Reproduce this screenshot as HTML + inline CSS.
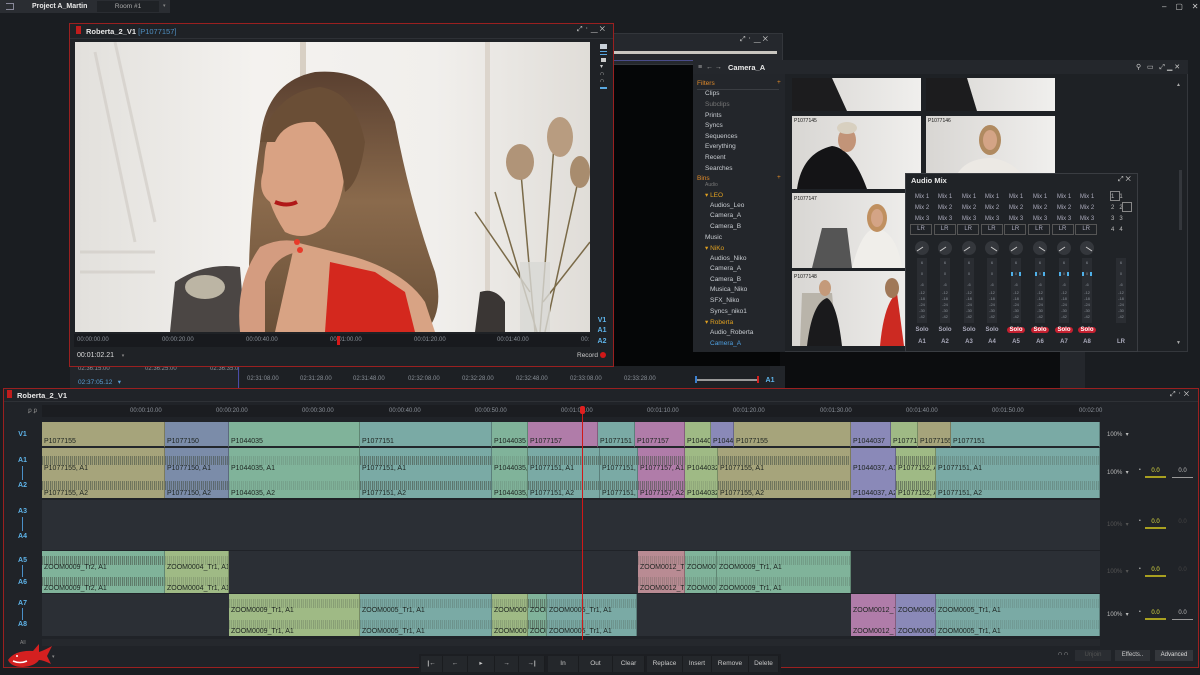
<!DOCTYPE html>
<html><head><meta charset="utf-8"><style>
*{margin:0;padding:0;box-sizing:border-box}
body{width:1200px;height:675px;background:#1a1d21;font-family:"Liberation Sans",sans-serif;color:#c8ccd0;position:relative;overflow:hidden;font-size:7px}
.abs{position:absolute}
.c{position:absolute;overflow:hidden;border-right:1px solid rgba(0,0,0,.25)}
.c i{position:absolute;left:2px;bottom:1px;font-style:normal;font-size:7px;color:#1d2420;white-space:nowrap}
.c i.l1{bottom:auto;top:17px}
.a42 i.l1{top:13px}
.c b{position:absolute;left:0;right:0;height:9px;background:repeating-linear-gradient(90deg,rgba(70,80,70,.6) 0 1px,rgba(70,80,70,.15) 1px 2px,rgba(70,80,70,.5) 2px 3px,transparent 3px 4px)}
.a50 b{top:8px}.a50 b.w2{top:33px}
.a42 b{top:5px}.a42 b.w2{top:26px}
.c.v{border-bottom:2px solid #22262b}
.y{background:#a6a47b}.bl{background:#7b8ca9}.g{background:#80b39a}.t{background:#7aaaa5}.p{background:#b07ca9}.u{background:#8a89b8}.l{background:#9fba85}.r{background:#b98b93}
.tl{position:absolute;left:3px;width:39px;text-align:center;color:#5eb4ea;font-weight:bold;font-size:7px}
.win{position:absolute;border:1px solid #8b1e1e;background:#24272c}
.ttl{font-weight:bold;color:#e8e8e8;font-size:7.5px}
.side div{position:absolute;left:12px;font-size:6.5px;color:#c9cdd2}
.mx{position:absolute;font-size:6px;color:#aab;text-align:center;width:22px}
.btn{position:absolute;top:656px;height:16px;background:#24272b;color:#c8c8c8;font-size:6.5px;text-align:center;line-height:16px;border-right:1px solid #1a1c1f}
.rt{position:absolute;font-size:6px;color:#8a9098}
</style></head><body>

<!-- top bar -->
<div class="abs" style="left:0;top:0;width:170px;height:13px;background:#2a2d32"></div>
<div class="abs" style="left:6px;top:3px;width:8px;height:7px;border:1px solid #889;border-left:none"></div>
<div class="abs ttl" style="left:32px;top:3px;font-size:7px">Project A_Martin</div>
<div class="abs" style="left:97px;top:1px;width:62px;height:11px;background:#1f2226;color:#aaa;font-size:6.5px;text-align:center;line-height:11px">Room #1</div>
<div class="abs" style="left:163px;top:3px;font-size:5px;color:#888">▾</div>
<div class="abs" style="left:1162px;top:2px;font-size:8px;color:#ccc">–&nbsp;&nbsp;&nbsp;&nbsp;▢&nbsp;&nbsp;&nbsp;&nbsp;✕</div>

<!-- background windows -->
<div class="abs" style="left:605px;top:33px;width:178px;height:32px;background:#25282d;border:1px solid #33363b"></div>
<div class="abs" style="left:612px;top:51px;width:165px;height:3px;background:#c9c6c0"></div>
<div class="abs" style="left:612px;top:60px;width:90px;height:1px;background:#4a4c8a"></div>
<div class="abs" style="left:740px;top:36px;font-size:7px;color:#ccc">⤢ ᛫ ▁ ✕</div>
<div class="abs" style="left:605px;top:65px;width:480px;height:322px;background:#050607"></div>
<div class="abs" style="left:1060px;top:352px;width:25px;height:36px;background:#24272c"></div>
<div class="abs" style="left:780px;top:352px;width:280px;height:36px;background:#0c0d0f"></div>

<!-- strip under viewer -->
<div class="abs" style="left:70px;top:366px;width:715px;height:22px;background:#22252a"></div>
<div class="abs" style="left:240px;top:366px;width:530px;height:22px;background:#1d2024"></div>
<div class="rt" style="left:78px;top:366px">02:36:15:00</div><div class="rt" style="left:145px;top:366px">02:36:25:00</div><div class="rt" style="left:210px;top:366px">02:36:35:0</div>
<div class="abs" style="left:78px;top:378px;font-size:6.5px;color:#5a9fd4">02:37:05.12 &nbsp; ▾</div>
<div class="abs" style="left:238px;top:366px;width:1px;height:22px;background:#4a4ca8"></div>
<div class="rt" style="left:247px;top:376px">02:31:08.00</div><div class="rt" style="left:300px;top:376px">02:31:28.00</div><div class="rt" style="left:353px;top:376px">02:31:48.00</div><div class="rt" style="left:408px;top:376px">02:32:08.00</div><div class="rt" style="left:462px;top:376px">02:32:28.00</div><div class="rt" style="left:516px;top:376px">02:32:48.00</div><div class="rt" style="left:570px;top:376px">02:33:08.00</div><div class="rt" style="left:624px;top:376px">02:33:28.00</div>
<div class="abs" style="left:696px;top:379px;width:62px;height:2px;background:#999"></div>
<div class="abs" style="left:695px;top:376px;width:2px;height:7px;background:#3a7fd0"></div>
<div class="abs" style="left:757px;top:376px;width:2px;height:7px;background:#d02020"></div>
<div class="tl" style="left:760px;top:377px;width:20px">A1</div>

<!-- viewer window -->
<div class="win" style="left:69px;top:23px;width:545px;height:344px;border-color:#9a2020;background:#1f2226">
 <div class="abs" style="left:6px;top:2px;width:5px;height:8px;background:#c01c1c"></div>
 <div class="abs ttl" style="left:16px;top:3px">Roberta_2_V1 <span style="color:#4f8fc0;font-weight:normal">[P1077157]</span></div>
 <div class="abs" style="right:8px;top:2px;font-size:7px;color:#ccc">⤢ ᛫ ▁ ✕</div>
 <div class="abs" style="left:0;top:14px;width:543px;height:1px;background:#2e3136"></div>
</div>
<svg class="abs" style="left:75px;top:42px" width="515" height="290" viewBox="0 0 515 290">
 <defs>
  <linearGradient id="bg" x1="0" x2="1"><stop offset="0" stop-color="#e2e0dc"/><stop offset=".35" stop-color="#f4f2ef"/><stop offset=".7" stop-color="#f1efec"/><stop offset="1" stop-color="#e0ddd8"/></linearGradient>
  <linearGradient id="hair" x1="0" x2="0" y1="0" y2="1"><stop offset="0" stop-color="#5a4030"/><stop offset=".5" stop-color="#8a6a4c"/><stop offset="1" stop-color="#6a5038"/></linearGradient>
 </defs>
 <rect width="515" height="290" fill="url(#bg)"/>
 <rect x="225" y="0" width="6" height="290" fill="#d8d0c4"/>
 <rect x="410" y="0" width="5" height="290" fill="#dcd5cc"/>
 <g stroke="#cfcac4" stroke-width="3" opacity=".6"><line x1="20" y1="10" x2="60" y2="200"/><line x1="40" y1="0" x2="80" y2="180"/><line x1="5" y1="210" x2="80" y2="210"/><line x1="5" y1="230" x2="80" y2="230"/></g>
 <g stroke="#7a6a48" stroke-width="1.5" fill="none"><path d="M460 290 L445 120"/><path d="M465 290 L480 90"/><path d="M462 290 L420 150"/><path d="M470 290 L505 130"/><path d="M455 250 L400 170"/><path d="M468 260 L515 200"/></g>
 <ellipse cx="445" cy="120" rx="14" ry="18" fill="#b09478"/><ellipse cx="485" cy="95" rx="13" ry="20" fill="#b89c80"/><ellipse cx="505" cy="130" rx="10" ry="16" fill="#a88c6e"/>
 <rect x="445" y="220" width="30" height="70" fill="#d8d8d4" opacity=".8"/>
 <path d="M95 290 L100 240 Q130 220 165 225 L170 290Z" fill="#4b4644"/>
 <path d="M400 290 L405 250 Q420 245 430 260 L430 290Z" fill="#3a3634"/>
 <ellipse cx="130" cy="245" rx="20" ry="12" fill="#bcb5a4"/>
 <path d="M185 100 Q190 40 240 30 Q300 25 320 80 Q335 160 360 230 Q370 270 350 290 L175 290 Q170 200 185 100Z" fill="url(#hair)"/>
 <path d="M220 200 L280 215 Q330 230 350 260 L360 290 L200 290Z" fill="#d8a384"/>
 <path d="M255 220 L300 230 L330 250 L340 290 L250 290 Z" fill="#d4281e"/>
 <path d="M190 110 Q195 70 240 70 Q270 75 270 120 Q270 160 250 185 Q230 200 210 190 Q200 175 195 160 Q182 150 188 130Z" fill="#d9a283"/>
 <path d="M200 160 Q212 165 222 160" stroke="#b01818" stroke-width="4" fill="none"/>
 <path d="M185 100 Q200 50 245 45 Q280 50 290 100 Q285 140 270 150 Q265 100 240 80 Q210 78 200 100Z" fill="#6a4e36"/>
 <path d="M165 290 Q160 240 185 205 Q205 195 225 200 L225 210 Q200 212 190 240 L190 290Z" fill="#d49c80"/>
 <circle cx="222" cy="200" r="3" fill="#e83a2a"/><circle cx="225" cy="208" r="3" fill="#e83a2a"/>
</svg>
<div class="abs" style="left:600px;top:44px;width:7px;height:5px;background:#c8d0d8"></div>
<div class="abs" style="left:600px;top:51px;width:7px;height:4px;border-top:1px solid #5aa8e0;border-bottom:1px solid #5aa8e0"></div>
<div class="abs" style="left:601px;top:58px;width:5px;height:4px;background:#ccc"></div>
<div class="abs" style="left:600px;top:64px;font-size:6px;color:#ccc;line-height:7px">▾<br>∩<br>∩</div>
<div class="abs" style="left:600px;top:84px;width:7px;height:5px;border-bottom:2px solid #5aa8e0"></div>
<div class="tl" style="left:592px;top:317px;width:20px">V1</div>
<div class="tl" style="left:592px;top:327px;width:20px">A1</div>
<div class="tl" style="left:592px;top:338px;width:20px">A2</div>
<div class="abs" style="left:74px;top:334px;width:516px;height:13px;background:#181a1e"></div>
<div class="rt" style="left:77px;top:337px">00:00:00.00</div><div class="rt" style="left:162px;top:337px">00:00:20.00</div><div class="rt" style="left:246px;top:337px">00:00:40.00</div><div class="rt" style="left:330px;top:337px">00:01:00.00</div><div class="rt" style="left:414px;top:337px">00:01:20.00</div><div class="rt" style="left:497px;top:337px">00:01:40.00</div><div class="rt" style="left:581px;top:337px">00:</div>
<div class="abs" style="left:337px;top:336px;width:3px;height:9px;background:#d81818"></div>
<div class="abs" style="left:77px;top:352px;font-size:7px;color:#ddd">00:01:02.21 &nbsp;&nbsp; <span style="font-size:5px;color:#888">▾</span></div>
<div class="abs" style="left:577px;top:352px;font-size:6.5px;color:#ccc">Record</div>
<div class="abs" style="left:600px;top:352px;width:6px;height:6px;border-radius:3px;background:#d01818"></div>

<!-- Camera_A bin -->
<div class="abs" style="left:693px;top:60px;width:495px;height:292px;background:#1e2125;border:1px solid #34373c"></div>
<div class="abs" style="left:693px;top:60px;width:495px;height:14px;background:#24272c"></div>
<div class="abs" style="left:698px;top:64px;font-size:7px;color:#aaa">≡ &nbsp;← →</div>
<div class="abs ttl" style="left:728px;top:63px">Camera_A</div>
<div class="abs" style="left:1136px;top:63px;font-size:7px;color:#ccc">⚲ &nbsp; ▭ &nbsp; ⤢ ▁ ✕</div>
<div class="abs side" style="left:693px;top:74px;width:92px;height:278px;background:#23262b">
 <div style="left:4px;top:6px;color:#e08a2a">Filters</div><div style="left:84px;top:5px;color:#e08a2a">+</div>
 <div style="left:4px;top:15px;width:82px;height:1px;background:#3a3d42"></div>
 <div style="top:16px">Clips</div><div style="top:27px;color:#777">Subclips</div><div style="top:38px">Prints</div><div style="top:48px">Syncs</div><div style="top:59px">Sequences</div><div style="top:69px">Everything</div><div style="top:80px">Recent</div><div style="top:91px">Searches</div>
 <div style="left:4px;top:101px;color:#e08a2a">Bins</div><div style="left:84px;top:100px;color:#e08a2a">+</div>
 <div style="top:108px;color:#777;font-size:5px">Audio</div>
 <div style="top:117px;color:#e0a020">▾ LEO</div><div style="left:17px;top:128px">Audios_Leo</div><div style="left:17px;top:138px">Camera_A</div><div style="left:17px;top:149px">Camera_B</div><div style="top:160px">Music</div>
 <div style="top:170px;color:#e0a020">▾ NiKo</div><div style="left:17px;top:181px">Audios_Niko</div><div style="left:17px;top:191px">Camera_A</div><div style="left:17px;top:202px">Camera_B</div><div style="left:17px;top:212px">Musica_Niko</div><div style="left:17px;top:223px">SFX_Niko</div><div style="left:17px;top:234px">Syncs_niko1</div>
 <div style="top:244px;color:#e0a020">▾ Roberta</div><div style="left:17px;top:255px">Audio_Roberta</div><div style="left:17px;top:266px;color:#4fa0e0">Camera_A</div>
</div>
<svg class="abs" style="left:792px;top:78px" width="264" height="268">
 <defs><linearGradient id="tb" x1="0" x2="1"><stop offset="0" stop-color="#d8d6d3"/><stop offset="1" stop-color="#f0efed"/></linearGradient></defs>
 <rect x="0" y="0" width="129" height="33" fill="url(#tb)"/><rect x="134" y="0" width="129" height="33" fill="url(#tb)"/>
 <path d="M0 0 L40 0 L55 33 L0 33Z" fill="#1c1c1e"/><path d="M134 0 L175 0 L185 33 L134 33Z" fill="#1c1c1e"/>
 <rect x="0" y="38" width="129" height="73" fill="url(#tb)"/><rect x="134" y="38" width="129" height="73" fill="url(#tb)"/>
 <path d="M5 111 Q10 75 40 68 Q60 70 75 111Z" fill="#141416"/><ellipse cx="55" cy="62" rx="9" ry="12" fill="#c29478"/><ellipse cx="55" cy="50" rx="10" ry="6" fill="#d8d0c0"/>
 <path d="M160 111 Q165 80 200 80 Q230 85 235 111Z" fill="#ece9e4"/><ellipse cx="198" cy="62" rx="11" ry="15" fill="#b08a60"/><ellipse cx="198" cy="62" rx="7" ry="10" fill="#d4a486"/>
 <rect x="0" y="115" width="129" height="75" fill="url(#tb)"/>
 <path d="M60 190 Q70 150 85 150 Q105 155 110 190Z" fill="#f0eeea"/><ellipse cx="85" cy="140" rx="10" ry="14" fill="#c09060"/><ellipse cx="85" cy="140" rx="6" ry="9" fill="#d4a486"/><path d="M20 190 L30 150 L55 150 L60 190Z" fill="#555"/>
 <rect x="0" y="193" width="129" height="75" fill="url(#tb)"/>
 <path d="M8 268 L10 215 L40 215 L45 268Z" fill="#b9b4aa"/><path d="M15 268 Q20 225 35 220 Q45 225 50 268Z" fill="#1a1a1c"/><ellipse cx="33" cy="210" rx="6" ry="8" fill="#c49a7a"/>
 <path d="M88 268 Q92 225 105 215 L112 268Z" fill="#cc2a22"/><ellipse cx="100" cy="210" rx="7" ry="10" fill="#a07858"/>
 <text x="2" y="44" font-size="5" fill="#111" font-family="Liberation Sans">P1077145</text><text x="136" y="44" font-size="5" fill="#111" font-family="Liberation Sans">P1077146</text><text x="2" y="122" font-size="5" fill="#111" font-family="Liberation Sans">P1077147</text><text x="2" y="200" font-size="5" fill="#111" font-family="Liberation Sans">P1077148</text>
</svg>
<div class="abs" style="left:1176px;top:82px;font-size:5px;color:#aaa">▲</div>
<div class="abs" style="left:1176px;top:340px;font-size:5px;color:#aaa">▼</div>
<div class="abs" style="left:1179px;top:170px;width:3px;height:60px;background:#34373c"></div>

<!-- Audio Mix -->
<div class="abs" style="left:905px;top:173px;width:233px;height:179px;background:#202327;border:1px solid #3a3d42"></div>
<div class="abs ttl" style="left:911px;top:176px">Audio Mix</div>
<div class="abs" style="left:1118px;top:176px;font-size:7px;color:#ccc">⤢ ✕</div>
<div class="mx" style="left:911px;top:192px;line-height:11px">Mix 1<br>Mix 2<br>Mix 3</div><div class="mx" style="left:934px;top:192px;line-height:11px">Mix 1<br>Mix 2<br>Mix 3</div><div class="mx" style="left:958px;top:192px;line-height:11px">Mix 1<br>Mix 2<br>Mix 3</div><div class="mx" style="left:981px;top:192px;line-height:11px">Mix 1<br>Mix 2<br>Mix 3</div><div class="mx" style="left:1005px;top:192px;line-height:11px">Mix 1<br>Mix 2<br>Mix 3</div><div class="mx" style="left:1029px;top:192px;line-height:11px">Mix 1<br>Mix 2<br>Mix 3</div><div class="mx" style="left:1053px;top:192px;line-height:11px">Mix 1<br>Mix 2<br>Mix 3</div><div class="mx" style="left:1076px;top:192px;line-height:11px">Mix 1<br>Mix 2<br>Mix 3</div>
<div class="abs" style="left:1111px;top:192px;font-size:6px;color:#bbb;line-height:11px">1 &nbsp;&nbsp;1<br>2 &nbsp;&nbsp;2<br>3 &nbsp;&nbsp;3<br>4 &nbsp;&nbsp;4</div>
<div class="abs" style="left:1110px;top:191px;width:10px;height:10px;border:1px solid #888"></div><div class="abs" style="left:1122px;top:202px;width:10px;height:10px;border:1px solid #888"></div>
<div class="abs" style="left:910px;top:224px;width:190px;height:11px;display:flex">
 <div class="mx" style="position:static;border:1px solid #555;margin-right:1.6px;line-height:9px">LR</div><div class="mx" style="position:static;border:1px solid #555;margin-right:1.6px;line-height:9px">LR</div><div class="mx" style="position:static;border:1px solid #555;margin-right:1.6px;line-height:9px">LR</div><div class="mx" style="position:static;border:1px solid #555;margin-right:1.6px;line-height:9px">LR</div><div class="mx" style="position:static;border:1px solid #555;margin-right:1.6px;line-height:9px">LR</div><div class="mx" style="position:static;border:1px solid #555;margin-right:1.6px;line-height:9px">LR</div><div class="mx" style="position:static;border:1px solid #555;margin-right:1.6px;line-height:9px">LR</div><div class="mx" style="position:static;border:1px solid #555;line-height:9px">LR</div>
</div>
<svg class="abs" style="left:905px;top:238px" width="233" height="90">
 <g fill="#34373c"><circle cx="17" cy="10" r="7"/><circle cx="40" cy="10" r="7"/><circle cx="64" cy="10" r="7"/><circle cx="87" cy="10" r="7"/><circle cx="111" cy="10" r="7"/><circle cx="135" cy="10" r="7"/><circle cx="159" cy="10" r="7"/><circle cx="182" cy="10" r="7"/></g>
 <g stroke="#ccc" stroke-width="1"><line x1="12" y1="13" x2="18" y2="9"/><line x1="35" y1="13" x2="41" y2="9"/><line x1="59" y1="13" x2="65" y2="9"/><line x1="86" y1="9" x2="92" y2="13"/><line x1="106" y1="13" x2="112" y2="9"/><line x1="134" y1="9" x2="140" y2="13"/><line x1="154" y1="13" x2="160" y2="9"/><line x1="181" y1="9" x2="187" y2="13"/></g>
 <g fill="#2a2d32"><rect x="12" y="20" width="10" height="65"/><rect x="35" y="20" width="10" height="65"/><rect x="59" y="20" width="10" height="65"/><rect x="82" y="20" width="10" height="65"/><rect x="106" y="20" width="10" height="65"/><rect x="130" y="20" width="10" height="65"/><rect x="154" y="20" width="10" height="65"/><rect x="177" y="20" width="10" height="65"/><rect x="211" y="20" width="10" height="65"/></g>
 <g fill="#4fb0e8"><rect x="106" y="34" width="2" height="4"/><rect x="114" y="34" width="2" height="4"/><rect x="130" y="34" width="2" height="4"/><rect x="138" y="34" width="2" height="4"/><rect x="154" y="34" width="2" height="4"/><rect x="162" y="34" width="2" height="4"/><rect x="177" y="34" width="2" height="4"/><rect x="185" y="34" width="2" height="4"/></g>
 <g fill="#8a9098" font-size="4" font-family="Liberation Sans" text-anchor="middle">
  <text x="17" y="26">6</text><text x="17" y="37">0</text><text x="17" y="48">-6</text><text x="17" y="56">-12</text><text x="17" y="62">-18</text><text x="17" y="68">-24</text><text x="17" y="74">-30</text><text x="17" y="80">-42</text>
  <text x="40" y="26">6</text><text x="40" y="37">0</text><text x="40" y="48">-6</text><text x="40" y="56">-12</text><text x="40" y="62">-18</text><text x="40" y="68">-24</text><text x="40" y="74">-30</text><text x="40" y="80">-42</text>
  <text x="64" y="26">6</text><text x="64" y="37">0</text><text x="64" y="48">-6</text><text x="64" y="56">-12</text><text x="64" y="62">-18</text><text x="64" y="68">-24</text><text x="64" y="74">-30</text><text x="64" y="80">-42</text>
  <text x="87" y="26">6</text><text x="87" y="37">0</text><text x="87" y="48">-6</text><text x="87" y="56">-12</text><text x="87" y="62">-18</text><text x="87" y="68">-24</text><text x="87" y="74">-30</text><text x="87" y="80">-42</text>
  <text x="111" y="26">6</text><text x="111" y="37">0</text><text x="111" y="48">-6</text><text x="111" y="56">-12</text><text x="111" y="62">-18</text><text x="111" y="68">-24</text><text x="111" y="74">-30</text><text x="111" y="80">-42</text>
  <text x="135" y="26">6</text><text x="135" y="37">0</text><text x="135" y="48">-6</text><text x="135" y="56">-12</text><text x="135" y="62">-18</text><text x="135" y="68">-24</text><text x="135" y="74">-30</text><text x="135" y="80">-42</text>
  <text x="159" y="26">6</text><text x="159" y="37">0</text><text x="159" y="48">-6</text><text x="159" y="56">-12</text><text x="159" y="62">-18</text><text x="159" y="68">-24</text><text x="159" y="74">-30</text><text x="159" y="80">-42</text>
  <text x="182" y="26">6</text><text x="182" y="37">0</text><text x="182" y="48">-6</text><text x="182" y="56">-12</text><text x="182" y="62">-18</text><text x="182" y="68">-24</text><text x="182" y="74">-30</text><text x="182" y="80">-42</text>
  <text x="216" y="26">6</text><text x="216" y="37">0</text><text x="216" y="48">-6</text><text x="216" y="56">-12</text><text x="216" y="62">-18</text><text x="216" y="68">-24</text><text x="216" y="74">-30</text><text x="216" y="80">-42</text>
 </g>
</svg>
<div class="abs" style="left:911px;top:327px;font-size:6px;color:#777;font-weight:bold;width:250px">
 <span class="mx" style="left:0">Solo</span><span class="mx" style="left:23px">Solo</span><span class="mx" style="left:47px">Solo</span><span class="mx" style="left:70px">Solo</span>
 <span class="mx" style="left:94px;background:#c42030;color:#fff;border-radius:3px;width:18px;margin-left:2px">Solo</span><span class="mx" style="left:118px;background:#c42030;color:#fff;border-radius:3px;width:18px;margin-left:2px">Solo</span><span class="mx" style="left:142px;background:#c42030;color:#fff;border-radius:3px;width:18px;margin-left:2px">Solo</span><span class="mx" style="left:165px;background:#c42030;color:#fff;border-radius:3px;width:18px;margin-left:2px">Solo</span>
</div>
<div class="abs" style="left:911px;top:339px;font-size:6.5px;color:#4fb0e8;font-weight:bold">
 <span class="mx" style="left:0">A1</span><span class="mx" style="left:23px">A2</span><span class="mx" style="left:47px">A3</span><span class="mx" style="left:70px">A4</span><span class="mx" style="left:94px">A5</span><span class="mx" style="left:118px">A6</span><span class="mx" style="left:142px">A7</span><span class="mx" style="left:165px">A8</span><span class="mx" style="left:199px">LR</span>
</div>

<!-- TIMELINE -->
<div class="win" style="left:3px;top:388px;width:1196px;height:280px;border-color:#9a2020;background:#202328"></div>
<div class="abs" style="left:7px;top:390px;width:5px;height:8px;background:#c01c1c"></div>
<div class="abs ttl" style="left:17px;top:391px">Roberta_2_V1</div>
<div class="abs" style="left:1170px;top:391px;font-size:7px;color:#ccc">⤢ ᛫ ✕</div>
<div class="abs" style="left:4px;top:401px;width:1194px;height:1px;background:#2e3136"></div>
<div class="abs" style="left:28px;top:407px;font-size:6px;color:#888">ꝑ ꝑ</div>
<div class="abs" style="left:42px;top:405px;width:1058px;height:12px;background:#1b1d21"></div>
<div class="rt" style="left:130px;top:408px">00:00:10.00</div><div class="rt" style="left:216px;top:408px">00:00:20.00</div><div class="rt" style="left:302px;top:408px">00:00:30.00</div><div class="rt" style="left:389px;top:408px">00:00:40.00</div><div class="rt" style="left:475px;top:408px">00:00:50.00</div><div class="rt" style="left:561px;top:408px">00:01:00.00</div><div class="rt" style="left:647px;top:408px">00:01:10.00</div><div class="rt" style="left:733px;top:408px">00:01:20.00</div><div class="rt" style="left:820px;top:408px">00:01:30.00</div><div class="rt" style="left:906px;top:408px">00:01:40.00</div><div class="rt" style="left:992px;top:408px">00:01:50.00</div><div class="rt" style="left:1079px;top:408px">00:02:00</div>
<div class="abs" style="left:42px;top:422px;width:1058px;height:76px;background:#2b2f35"></div>
<div class="abs" style="left:42px;top:500px;width:1058px;height:50px;background:#2b2f35"></div>
<div class="abs" style="left:42px;top:551px;width:1058px;height:42px;background:#2b2f35"></div>
<div class="abs" style="left:42px;top:594px;width:1058px;height:42px;background:#2b2f35"></div>
<div class="abs" style="left:42px;top:639px;width:1058px;height:7px;background:#25282d"></div>
<div class="tl" style="top:431px">V1</div>
<div class="tl" style="top:457px">A1</div><div class="abs" style="left:22px;top:466px;width:1px;height:14px;background:#4a90c8"></div><div class="tl" style="top:482px">A2</div>
<div class="tl" style="top:508px">A3</div><div class="abs" style="left:22px;top:517px;width:1px;height:14px;background:#4a90c8"></div><div class="tl" style="top:533px">A4</div>
<div class="tl" style="top:557px">A5</div><div class="abs" style="left:22px;top:565px;width:1px;height:12px;background:#4a90c8"></div><div class="tl" style="top:579px">A6</div>
<div class="tl" style="top:600px">A7</div><div class="abs" style="left:22px;top:608px;width:1px;height:12px;background:#4a90c8"></div><div class="tl" style="top:621px">A8</div>
<div class="abs" style="left:20px;top:640px;font-size:5px;color:#888">All</div>

<div class="c v y" style="left:42px;width:123px;top:422px;height:26px"><i>P1077155</i></div>
<div class="c v bl" style="left:165px;width:64px;top:422px;height:26px"><i>P1077150</i></div>
<div class="c v g" style="left:229px;width:131px;top:422px;height:26px"><i>P1044035</i></div>
<div class="c v t" style="left:360px;width:132px;top:422px;height:26px"><i>P1077151</i></div>
<div class="c v g" style="left:492px;width:36px;top:422px;height:26px"><i>P1044035</i></div>
<div class="c v p" style="left:528px;width:70px;top:422px;height:26px"><i>P1077157</i></div>
<div class="c v t" style="left:598px;width:37px;top:422px;height:26px"><i>P1077151</i></div>
<div class="c v p" style="left:635px;width:50px;top:422px;height:26px"><i>P1077157</i></div>
<div class="c v l" style="left:685px;width:26px;top:422px;height:26px"><i>P104403</i></div>
<div class="c v u" style="left:711px;width:23px;top:422px;height:26px"><i>P10440</i></div>
<div class="c v y" style="left:734px;width:117px;top:422px;height:26px"><i>P1077155</i></div>
<div class="c v u" style="left:851px;width:40px;top:422px;height:26px"><i>P1044037</i></div>
<div class="c v l" style="left:891px;width:27px;top:422px;height:26px"><i>P107715</i></div>
<div class="c v y" style="left:918px;width:33px;top:422px;height:26px"><i>P1077155</i></div>
<div class="c v t" style="left:951px;width:149px;top:422px;height:26px"><i>P1077151</i></div>
<div class="c a50 y" style="left:42px;width:123px;top:448px;height:50px"><b></b><b class="w2"></b><i class="l1">P1077155, A1</i><i>P1077155, A2</i></div>
<div class="c a50 bl" style="left:165px;width:64px;top:448px;height:50px"><b></b><b class="w2"></b><i class="l1">P1077150, A1</i><i>P1077150, A2</i></div>
<div class="c a50 g" style="left:229px;width:131px;top:448px;height:50px"><b style="opacity:.3"></b><b class="w2" style="opacity:.3"></b><i class="l1">P1044035, A1</i><i>P1044035, A2</i></div>
<div class="c a50 t" style="left:360px;width:132px;top:448px;height:50px"><b></b><b class="w2"></b><i class="l1">P1077151, A1</i><i>P1077151, A2</i></div>
<div class="c a50 g" style="left:492px;width:36px;top:448px;height:50px"><b style="opacity:.3"></b><b class="w2" style="opacity:.3"></b><i class="l1">P1044035, A1</i><i>P1044035, A2</i></div>
<div class="c a50 t" style="left:528px;width:72px;top:448px;height:50px"><b></b><b class="w2"></b><i class="l1">P1077151, A1</i><i>P1077151, A2</i></div>
<div class="c a50 t" style="left:600px;width:38px;top:448px;height:50px"><b></b><b class="w2"></b><i class="l1">P1077151,</i><i>P1077151,</i></div>
<div class="c a50 p" style="left:638px;width:47px;top:448px;height:50px"><b></b><b class="w2"></b><i class="l1">P1077157, A1</i><i>P1077157, A2</i></div>
<div class="c a50 l" style="left:685px;width:33px;top:448px;height:50px"><b style="opacity:.3"></b><b class="w2" style="opacity:.3"></b><i class="l1">P1044032,</i><i>P1044032,</i></div>
<div class="c a50 y" style="left:718px;width:133px;top:448px;height:50px"><b></b><b class="w2"></b><i class="l1">P1077155, A1</i><i>P1077155, A2</i></div>
<div class="c a50 u" style="left:851px;width:45px;top:448px;height:50px"><i class="l1">P1044037, A1</i><i>P1044037, A2</i></div>
<div class="c a50 l" style="left:896px;width:40px;top:448px;height:50px"><b></b><b class="w2"></b><i class="l1">P1077152, A1</i><i>P1077152, A2</i></div>
<div class="c a50 t" style="left:936px;width:164px;top:448px;height:50px"><b style="opacity:.5"></b><b class="w2" style="opacity:.5"></b><i class="l1">P1077151, A1</i><i>P1077151, A2</i></div>
<div class="c a42 g" style="left:42px;width:123px;top:551px;height:42px"><b></b><b class="w2"></b><i class="l1">ZOOM0009_Tr2, A1</i><i>ZOOM0009_Tr2, A1</i></div>
<div class="c a42 l" style="left:165px;width:64px;top:551px;height:42px"><b style="opacity:.4"></b><b class="w2" style="opacity:.4"></b><i class="l1">ZOOM0004_Tr1, A1</i><i>ZOOM0004_Tr1, A1</i></div>
<div class="c a42 r" style="left:638px;width:47px;top:551px;height:42px"><b style="opacity:.4"></b><b class="w2" style="opacity:.4"></b><i class="l1">ZOOM0012_Tr2,</i><i>ZOOM0012_Tr2,</i></div>
<div class="c a42 g" style="left:685px;width:32px;top:551px;height:42px"><b style="opacity:.4"></b><b class="w2" style="opacity:.4"></b><i class="l1">ZOOM0004</i><i>ZOOM0004</i></div>
<div class="c a42 g" style="left:717px;width:134px;top:551px;height:42px"><b style="opacity:.4"></b><b class="w2" style="opacity:.4"></b><i class="l1">ZOOM0009_Tr1, A1</i><i>ZOOM0009_Tr1, A1</i></div>
<div class="c a42 l" style="left:229px;width:131px;top:594px;height:42px"><b style="opacity:.45"></b><b class="w2" style="opacity:.45"></b><i class="l1">ZOOM0009_Tr1, A1</i><i>ZOOM0009_Tr1, A1</i></div>
<div class="c a42 t" style="left:360px;width:132px;top:594px;height:42px"><b style="opacity:.45"></b><b class="w2" style="opacity:.45"></b><i class="l1">ZOOM0005_Tr1, A1</i><i>ZOOM0005_Tr1, A1</i></div>
<div class="c a42 l" style="left:492px;width:36px;top:594px;height:42px"><b style="opacity:.4"></b><b class="w2" style="opacity:.4"></b><i class="l1">ZOOM0009</i><i>ZOOM0009</i></div>
<div class="c a42 g" style="left:528px;width:19px;top:594px;height:42px"><b></b><b class="w2"></b><i class="l1">ZOOM</i><i>ZOOM</i></div>
<div class="c a42 t" style="left:547px;width:90px;top:594px;height:42px"><b style="opacity:.45"></b><b class="w2" style="opacity:.45"></b><i class="l1">ZOOM0005_Tr1, A1</i><i>ZOOM0005_Tr1, A1</i></div>
<div class="c a42 p" style="left:851px;width:45px;top:594px;height:42px"><i class="l1">ZOOM0012_Tr1</i><i>ZOOM0012_Tr1</i></div>
<div class="c a42 u" style="left:896px;width:40px;top:594px;height:42px"><i class="l1">ZOOM0006_T</i><i>ZOOM0006_T</i></div>
<div class="c a42 t" style="left:936px;width:164px;top:594px;height:42px"><b style="opacity:.3"></b><b class="w2" style="opacity:.3"></b><i class="l1">ZOOM0005_Tr1, A1</i><i>ZOOM0005_Tr1, A1</i></div>
<div class="abs" style="left:582px;top:408px;width:1px;height:232px;background:#d01818"></div>
<div class="abs" style="left:580px;top:406px;width:5px;height:8px;background:#e02020;border-radius:2px"></div>
<div class="abs" style="left:1107px;top:431px;font-size:6px;color:#bbb">100% &nbsp;▾</div>
<div class="abs" style="left:1107px;top:469px;font-size:6px;color:#bbb">100% &nbsp;▾</div>
<div class="abs" style="left:1107px;top:521px;font-size:6px;color:#555">100% &nbsp;▾</div>
<div class="abs" style="left:1107px;top:568px;font-size:6px;color:#555">100% &nbsp;▾</div>
<div class="abs" style="left:1107px;top:611px;font-size:6px;color:#bbb">100% &nbsp;▾</div>
<div class="abs" style="left:1145px;top:468px;width:21px;height:10px;font-size:6px;color:#e0e040;text-align:center;border-bottom:2px solid #a8a020">0.0</div><div class="abs" style="left:1172px;top:468px;width:21px;height:10px;font-size:6px;color:#bbb;text-align:center;border-bottom:1px solid #999">0.0</div>
<div class="abs" style="left:1145px;top:519px;width:21px;height:10px;font-size:6px;color:#e0e040;text-align:center;border-bottom:2px solid #a8a020">0.0</div><div class="abs" style="left:1172px;top:519px;font-size:6px;color:#444;width:21px;text-align:center">0.0</div>
<div class="abs" style="left:1145px;top:567px;width:21px;height:10px;font-size:6px;color:#e0e040;text-align:center;border-bottom:2px solid #a8a020">0.0</div><div class="abs" style="left:1172px;top:567px;font-size:6px;color:#444;width:21px;text-align:center">0.0</div>
<div class="abs" style="left:1145px;top:610px;width:21px;height:10px;font-size:6px;color:#e0e040;text-align:center;border-bottom:2px solid #a8a020">0.0</div><div class="abs" style="left:1172px;top:610px;width:21px;height:10px;font-size:6px;color:#bbb;text-align:center;border-bottom:1px solid #999">0.0</div>
<div class="abs" style="left:1139px;top:467px;font-size:5px;color:#ccc">•</div><div class="abs" style="left:1139px;top:518px;font-size:5px;color:#ccc">•</div><div class="abs" style="left:1139px;top:566px;font-size:5px;color:#ccc">•</div><div class="abs" style="left:1139px;top:609px;font-size:5px;color:#ccc">•</div>
<div class="abs" style="left:1058px;top:651px;font-size:6px;color:#bbb">∩ ∩</div>
<div class="abs" style="left:1075px;top:650px;width:36px;height:11px;background:#2a2d32;font-size:6px;color:#555;text-align:center;line-height:11px">Unjoin</div>
<div class="abs" style="left:1115px;top:650px;width:35px;height:11px;background:#2e3136;font-size:6px;color:#ccc;text-align:center;line-height:11px">Effects..</div>
<div class="abs" style="left:1155px;top:650px;width:38px;height:11px;background:#34373c;font-size:6px;color:#ddd;text-align:center;line-height:11px">Advanced</div>
<svg class="abs" style="left:5px;top:642px" width="48" height="28"><path d="M3 18 Q10 8 28 9 L34 2 L34 10 Q40 8 47 4 L42 14 L46 22 Q38 18 34 18 Q30 24 18 25 Q6 25 3 18Z" fill="#d42020"/><path d="M8 19 Q15 22 22 19" stroke="#fff" stroke-width="1.5" fill="none"/><circle cx="12" cy="14" r="1" fill="#fff"/></svg>
<div class="abs" style="left:52px;top:654px;font-size:5px;color:#888">▾</div>
<div class="abs" style="left:419px;top:654px;width:362px;height:20px;background:#1c1e22"></div>
<div class="btn" style="left:421px;width:22px;font-weight:bold">|←</div><div class="btn" style="left:443px;width:25px;font-weight:bold">←</div><div class="btn" style="left:468px;width:27px">▸</div><div class="btn" style="left:495px;width:24px;font-weight:bold">→</div><div class="btn" style="left:519px;width:26px;font-weight:bold">→|</div>
<div class="btn" style="left:548px;width:31px">In</div><div class="btn" style="left:579px;width:34px">Out</div><div class="btn" style="left:613px;width:32px">Clear</div><div class="btn" style="left:647px;width:36px">Replace</div><div class="btn" style="left:683px;width:29px">Insert</div><div class="btn" style="left:712px;width:37px">Remove</div><div class="btn" style="left:749px;width:30px">Delete</div>
</body></html>
